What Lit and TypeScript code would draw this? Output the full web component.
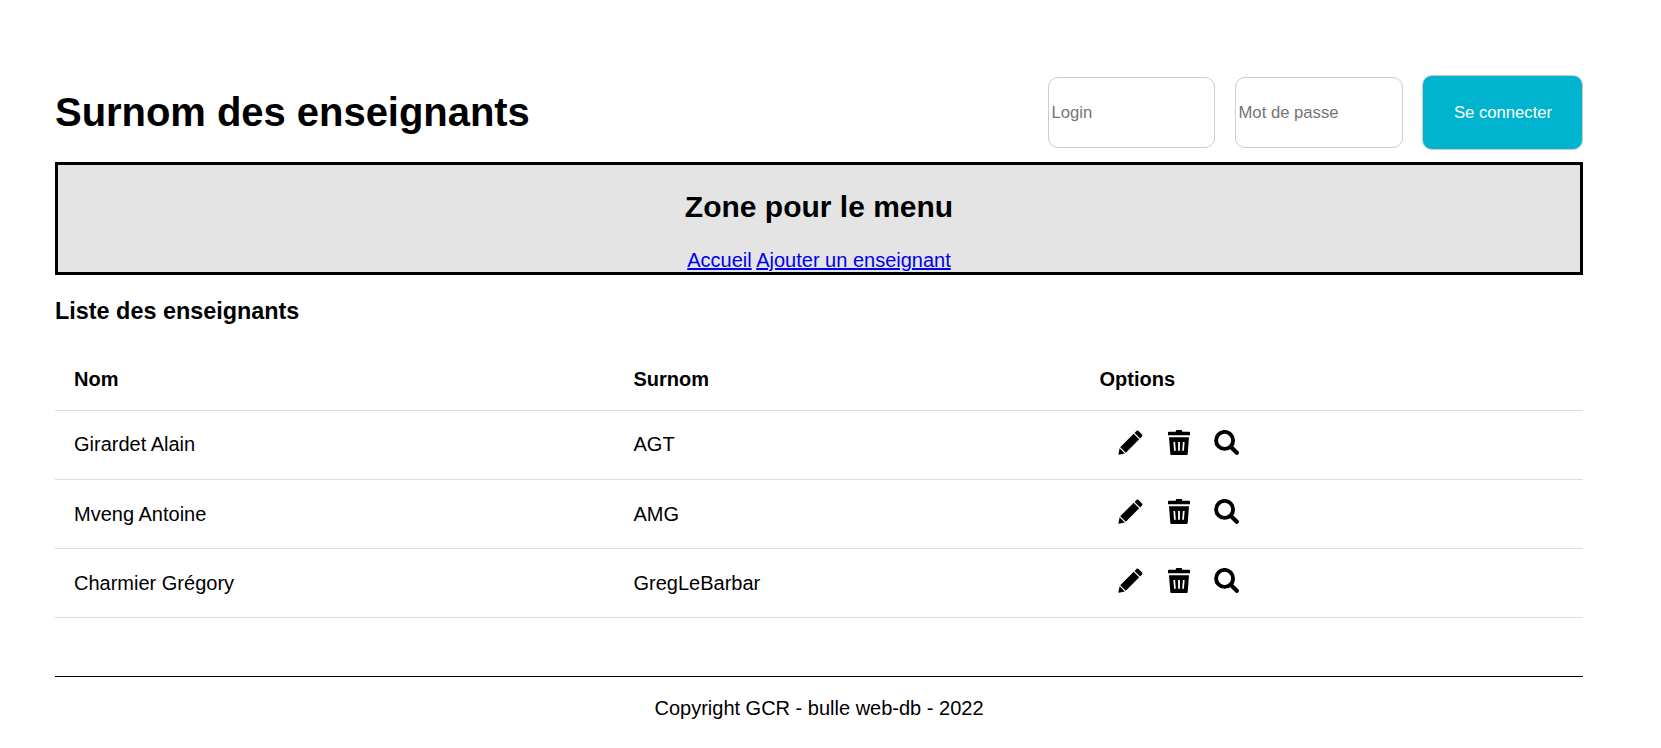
import { LitElement, html, css } from "lit";
import { customElement } from "lit/decorators.js";

interface Teacher {
  name: string;
  nickname: string;
}

const teachers: Teacher[] = [
  { name: "Girardet Alain", nickname: "AGT" },
  { name: "Mveng Antoine", nickname: "AMG" },
  { name: "Charmier Grégory", nickname: "GregLeBarbar" },
];

@customElement("teacher-actions")
class TeacherActions extends LitElement {
  static styles = css`
    :host {
      display: flex;
      padding-left: 18.5px;
    }
    .icon {
      display: block;
      width: 25px;
      height: 25px;
      fill: #000;
    }
    .trash {
      margin-left: 24.5px;
    }
    .search {
      margin-left: 21px;
    }
    .ring {
      fill: none;
      stroke: #000;
      stroke-width: 3.9;
    }
    .handle {
      stroke: #000;
      stroke-width: 4.2;
      stroke-linecap: round;
    }
  `;

  render() {
    return html`
      <svg class="icon" viewBox="0 0 25 25">
        <path d="M0.4 24.2 L1.6 18.3 L6.8 23.4 L0.9 24.7 Z" />
        <path d="M2.2 17.2 L15.7 3.8 L21.2 9.3 L7.8 22.7 Z" />
        <path d="M16.6 2.9 L18.7 0.8 Q19.5 0.1 20.3 0.8 L24.1 4.6 Q24.8 5.4 24.1 6.2 L22.1 8.4 Z" />
      </svg>
      <svg class="icon trash" viewBox="0 0 25 25">
        <path d="M0.8 1.8 H7.8 V1 Q7.8 0 8.8 0 H13.2 Q14.2 0 14.2 1 V1.8 H21.2 Q22 1.8 22 2.6 V5.2 H0 V2.6 Q0 1.8 0.8 1.8 Z" />
        <path
          fill-rule="evenodd"
          d="M1 7.2 H21 L19.7 24 Q19.6 25 18.6 25 H3.4 Q2.4 25 2.3 24 Z M5.4 12 L6.1 20.8 H7.8 L7.1 12 Z M10.1 12 V20.8 H11.9 V12 Z M14.9 12 L14.2 20.8 H15.9 L16.6 12 Z"
        />
      </svg>
      <svg class="icon search" viewBox="0 0 25 25">
        <circle class="ring" cx="10.6" cy="10.4" r="8.5" />
        <path class="handle" d="M17.2 17.2 L22.8 22.8" />
      </svg>
    `;
  }
}

@customElement("app-root")
class AppRoot extends LitElement {
  static styles = css`
    :host {
      display: block;
      box-sizing: border-box;
      height: 748px;
      padding: 75px 78px 0 55px;
      background: #fff;
      color: #000;
      font: 20px/22px "Liberation Sans", Arial, sans-serif;
    }
    .header {
      display: flex;
      align-items: flex-start;
      justify-content: space-between;
      height: 75px;
    }
    .title {
      margin: 15px 0 0;
      font-size: 40px;
      line-height: 44px;
      letter-spacing: -0.04px;
    }
    .login {
      display: flex;
      align-items: center;
    }
    .field,
    .submit {
      box-sizing: border-box;
      border: 1px solid #ccc;
      border-radius: 10px;
      font: 16.67px "Liberation Sans", Arial, sans-serif;
    }
    .field {
      width: 168px;
      height: 71px;
      margin-right: 19px;
      padding: 0 2.5px;
      background: #fff;
    }
    .user {
      width: 167px;
      margin-right: 20px;
    }
    .field::placeholder {
      color: #757575;
    }
    .submit {
      width: 161px;
      height: 75px;
      padding: 0 0 0 1px;
      background: #00b4cf;
      color: #fff;
    }
    .menu {
      box-sizing: border-box;
      height: 113px;
      margin-top: 12px;
      padding-top: 25px;
      border: 3px solid #000;
      background: #e4e4e4;
      text-align: center;
    }
    .menu-title {
      margin: 0 0 26px;
      font-size: 30px;
      line-height: 33px;
    }
    .link {
      color: #0000ee;
      text-decoration: underline;
    }
    .list-title {
      margin: 23px 0 24px;
      font-size: 23.4px;
      line-height: 26px;
    }
    .row {
      display: grid;
      grid-template-columns: 559.5px 466px 1fr;
      align-items: center;
      box-sizing: border-box;
      height: 69px;
      padding-left: 19px;
      border-bottom: 1px solid #ddd;
    }
    .head {
      height: 63px;
      font-weight: bold;
    }
    .head + .row .cell {
      margin-bottom: 2px;
    }
    .actions {
      margin-top: -5px;
    }
    .footer {
      margin-top: 58px;
      padding-top: 20px;
      border-top: 1px solid #000;
      text-align: center;
    }
  `;

  render() {
    return html`
      <header class="header">
        <h1 class="title">Surnom des enseignants</h1>
        <form class="login">
          <input class="field user" type="text" placeholder="Login" />
          <input class="field" type="password" placeholder="Mot de passe" />
          <button class="submit" type="button">Se connecter</button>
        </form>
      </header>
      <nav class="menu">
        <h2 class="menu-title">Zone pour le menu</h2>
        <a class="link" href="#">Accueil</a> <a class="link" href="#">Ajouter un enseignant</a>
      </nav>
      <main>
        <h3 class="list-title">Liste des enseignants</h3>
        <div class="row head">
          <span>Nom</span><span>Surnom</span><span>Options</span>
        </div>
        ${teachers.map(
          (t) => html`
            <div class="row">
              <span class="cell">${t.name}</span>
              <span class="cell">${t.nickname}</span>
              <teacher-actions class="actions"></teacher-actions>
            </div>
          `
        )}
      </main>
      <footer class="footer">Copyright GCR - bulle web-db - 2022</footer>
    `;
  }
}
